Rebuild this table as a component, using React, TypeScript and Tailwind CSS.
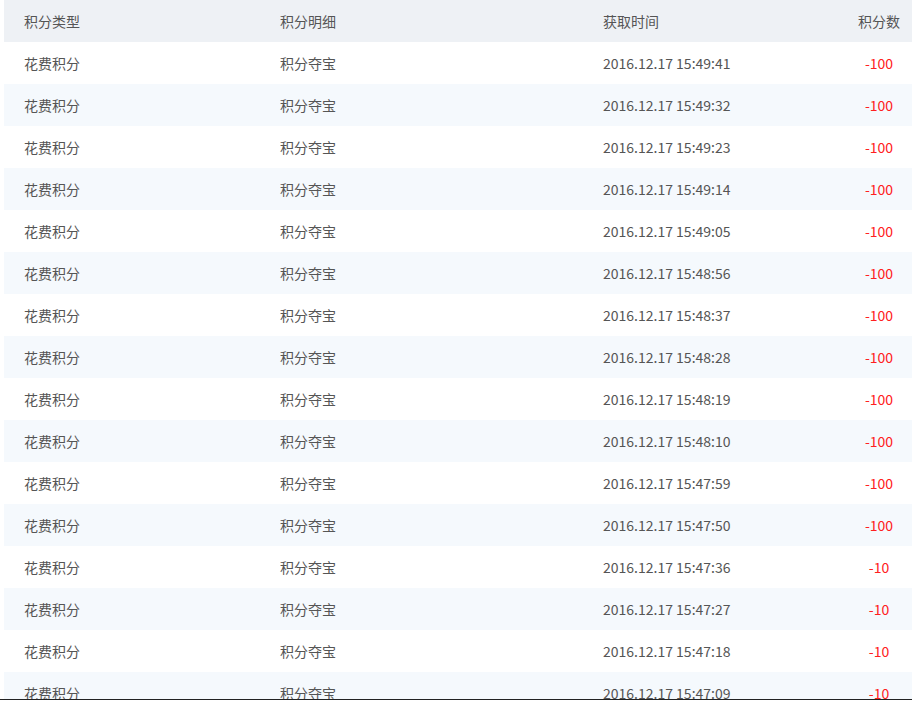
import React from 'react';

const times = [
  ['15:49:41', '-100'],
  ['15:49:32', '-100'],
  ['15:49:23', '-100'],
  ['15:49:14', '-100'],
  ['15:49:05', '-100'],
  ['15:48:56', '-100'],
  ['15:48:37', '-100'],
  ['15:48:28', '-100'],
  ['15:48:19', '-100'],
  ['15:48:10', '-100'],
  ['15:47:59', '-100'],
  ['15:47:50', '-100'],
  ['15:47:36', '-10'],
  ['15:47:27', '-10'],
  ['15:47:18', '-10'],
  ['15:47:09', '-10'],
];

const cols = 'grid grid-cols-[256px_323px_1fr_66px] h-[42px] items-center';

function App() {
  return (
    <div
      className="bg-white text-[14px] text-[#555]"
      style={{ fontFamily: '"Noto Sans CJK SC", "Noto Sans", sans-serif' }}
    >
      <div className="h-[699px] overflow-hidden pl-1">
        {/* Header */}
        <div className={`${cols} bg-[#eef1f5]`}>
          <div className="pl-5">积分类型</div>
          <div className="pl-5">积分明细</div>
          <div className="pl-5">获取时间</div>
          <div className="text-center">积分数</div>
        </div>
        {times.map(([t, n], i) => (
          <div key={i} className={`${cols} ${i % 2 === 1 ? 'bg-[#f5f9fd]' : 'bg-white'}`}>
            <div className="pl-5">花费积分</div>
            <div className="pl-5">积分夺宝</div>
            <div className="pl-5">2016.12.17 {t}</div>
            <div className="text-center text-[#ff2020]">{n}</div>
          </div>
        ))}
      </div>
      <div className="h-px bg-[#222]" />
      <div className="h-[2px] bg-white" />
    </div>
  );
}

export default App;
